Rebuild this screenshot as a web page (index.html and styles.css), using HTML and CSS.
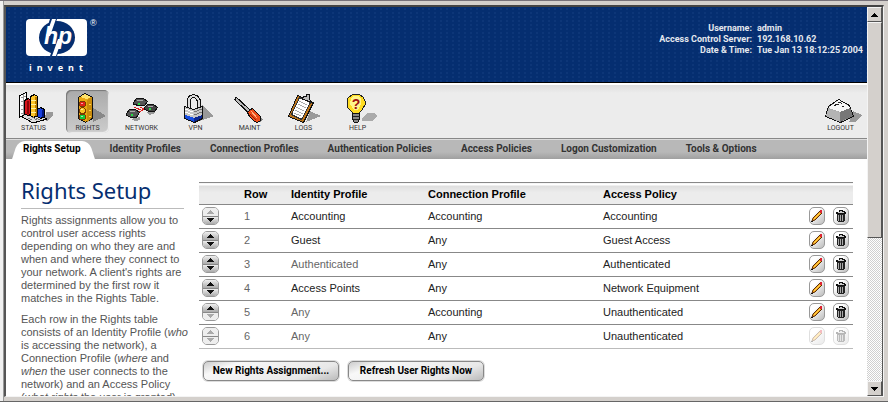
FILE: index.html
```html
<!DOCTYPE html>
<html lang="en">
<head>
    <meta charset="UTF-8">
    <meta name="viewport" content="width=device-width, initial-scale=1.0">
    <title>Rights Setup</title>
    <link rel="stylesheet" href="styles.css">
</head>
<body>
    <!-- Shared icons -->
    <svg class="symbols" aria-hidden="true">
        <symbol id="up" viewBox="0 0 7 4"><path d="M3 0h1v1h1v1h1v1h1v1H0V3h1V2h1V1h1z" fill="currentColor"/></symbol>
        <symbol id="down" viewBox="0 0 7 4"><path d="M0 0h7v1H6v1H5v1H4v1H3V3H2V2H1V1H0z" fill="currentColor"/></symbol>
        <symbol id="pencil" viewBox="0 0 14 16">
            <path d="M2 13l1-3 7-7 2 2-7 7z" fill="#f7a81c" stroke="#5a2c08"/>
            <path d="M4 11l6-6" stroke="#ffd34d"/>
            <path d="M10 2h2v3h-2z" fill="#d23"/>
            <path d="M1 13h2v1H1z" fill="#111"/>
        </symbol>
        <symbol id="trash" viewBox="0 0 14 16">
            <path d="M5 2h4v1h2v1h1v2H2V4h3z" fill="#111"/>
            <path d="M6 3h2v1H6zM4 4h6v1H4z" fill="#ccc"/>
            <path d="M3 6h8v7h-1v1H4v-1H3z" fill="#222"/>
            <path d="M4 7h1v6H4zM6 7h1v6H6zM8 7h1v6H8z" fill="#aaa"/>
        </symbol>
    </svg>

    <div class="window">
        <div class="page">
            <header class="banner">
                <div class="logo">
                    <svg viewBox="0 0 74 38" width="74" height="38" role="img" aria-label="hp">
                        <rect width="61" height="37" rx="4" fill="#fff"/>
                        <ellipse cx="31" cy="18.500" rx="18" ry="16.500" fill="#052e70"/>
                        <path d="M24 0h7l-2 6h-7zM31 37h-7l2-6h7z" fill="#052e70"/>
                        <path d="M26 0h4l-6 17h-4zM32 20h4l-6 17h-4z" fill="#fff"/>
                        <text x="18" y="25" class="logo-letters">hp</text>
                        <text x="64" y="7" class="logo-mark">®</text>
                    </svg>
                    <span class="tagline">invent</span>
                </div>
                <dl class="session">
                    <dt>Username:</dt><dd>admin</dd>
                    <dt>Access Control Server:</dt><dd>192.168.10.62</dd>
                    <dt>Date &amp; Time:</dt><dd>Tue Jan 13 18:12:25 2004</dd>
                </dl>
            </header>

            <div class="toolbar">
                <button class="tool">
                    <svg viewBox="0 0 43 34" width="43" height="34">
                        <path d="M29 27l5-2v-3h7v4l-6 5z" fill="#999"/>
                        <path d="M7 25l14 8 14-4-13-7z" fill="#ddd" stroke="#000"/>
                        <path d="M7.500 5.500l7-3v21l-7 4z" fill="#fff" stroke="#000"/>
                        <path d="M9 8l5-2M9 12l5-2M9 16l5-2M9 20l5-2M9 24l5-2M11 4v21" stroke="#999"/>
                        <path d="M12.500 10.500l4-2 3 2v14l-4 1-3-2z" fill="#d8151c" stroke="#000"/>
                        <path d="M16 11v13" stroke="#8a0508" stroke-width="2"/>
                        <path d="M18.500 6.500l4-2 3 2v19l-4 2-3-2z" fill="#ffc629" stroke="#000"/>
                        <path d="M23.500 7v19" stroke="#b67a00" stroke-width="2"/>
                        <path d="M19 10h5M19 14h5M19 18h5M19 22h5" stroke="#fff0a0"/>
                        <path d="M25.500 19.500l3-2 4 2v7l-4 2-3-2z" fill="#173fdd" stroke="#000"/>
                        <path d="M31 20v7" stroke="#001780" stroke-width="2"/>
                        <path d="M16 28l4 2M20 27l5 3M24 28l4 2" stroke="#777"/>
                    </svg>
                    <span>STATUS</span>
                </button>
                <button class="tool selected">
                    <svg viewBox="0 0 43 34" width="43" height="34">
                        <path d="M26 17l14 9-13 6z" fill="#888"/>
                        <path d="M12.500 7.500l6-4 8 4v21l-7 4-7-4z" fill="#e9a713" stroke="#111"/>
                        <path d="M21 10l5-3v21l-5 4z" fill="#c98b0c"/>
                        <path d="M14 7l5-3 6 3-4 2z" fill="#ffe36a"/>
                        <path d="M23 14h2M23 20h2M23 26h2" stroke="#ffd64c"/>
                        <circle cx="16.500" cy="14" r="3" fill="#e0201b" stroke="#7a3a00"/>
                        <circle cx="16.500" cy="20.500" r="3" fill="#f9c424" stroke="#7a3a00"/>
                        <circle cx="16.500" cy="27" r="3" fill="#16c93a" stroke="#7a3a00"/>
                        <path d="M15 13h2v1h-2zM15 19h2v1h-2zM15 26h2v1h-2z" fill="#fff" opacity=".6"/>
                    </svg>
                    <span>RIGHTS</span>
                </button>
                <button class="tool">
                    <svg viewBox="0 0 43 34" width="43" height="34">
                        <path d="M27 22l8-2v3l-6 2zM11 29l9-2v3l-5 1z" fill="#999"/>
                        <g stroke="#111">
                            <path d="M13.500 12.500l3-4h7l4 3-3 4h-5l-6-1z" fill="#555"/>
                            <path d="M24.500 17.500l3-3h6l4 3-3 4h-5l-5-2z" fill="#444"/>
                            <path d="M6.500 23.500l3-4h6l4 3-3 5h-5l-5-2z" fill="#555"/>
                        </g>
                        <path d="M14 17l9 4M20 17l4 2M19 22l5-3" stroke="#e02020"/>
                        <path d="M17 10l6 1M28 16l5 1M10 21l5 1" stroke="#aaa"/>
                        <path d="M18 13h2v2h-2zM29 18h2v2h-2zM11 24h2v2h-2z" fill="#22e041"/>
                    </svg>
                    <span>NETWORK</span>
                </button>
                <button class="tool">
                    <svg viewBox="0 0 43 34" width="43" height="34">
                        <path d="M28 15l12 11-14 5z" fill="#999"/>
                        <path d="M14.500 19V10l2-3 3-1 3 1 2 3v9" fill="none" stroke="#111" stroke-width="4"/>
                        <path d="M14.500 19V10l2-3 3-1 3 1 2 3v9" fill="none" stroke="#ddd" stroke-width="2"/>
                        <path d="M10.500 16.500l9 3 9-3v12l-8 4-10-4z" fill="#c8c8c8" stroke="#111"/>
                        <path d="M11 19l8 3M11 22l8 3" stroke="#fff"/>
                        <path d="M20 22l8-3M20 25l8-3" stroke="#777"/>
                        <path d="M11 25l9 3v4l-9-4z" fill="#174ee0"/>
                        <path d="M20 28l8-3v3l-8 4z" fill="#0b2790"/>
                    </svg>
                    <span>VPN</span>
                </button>
                <button class="tool">
                    <svg viewBox="0 0 43 34" width="43" height="34">
                        <path d="M25 20l10 9-3 3z" fill="#888"/>
                        <path d="M7 8l16 15" stroke="#111" stroke-width="4"/>
                        <path d="M8 9l14 13" stroke="#bbb" stroke-width="2"/>
                        <path d="M19.500 22.500l3-3 2-1 8 8v4l-3 2-3-1-5-5z" fill="#ed4b18" stroke="#111"/>
                        <path d="M23 21l6 7" stroke="#ffb080"/>
                        <path d="M22 24l6 6" stroke="#981d02"/>
                    </svg>
                    <span>MAINT</span>
                </button>
                <button class="tool">
                    <svg viewBox="0 0 43 34" width="43" height="34">
                        <path d="M28 21l11 5-15 6z" fill="#999"/>
                        <path d="M6.500 26.500l9-21 16 7-10 20z" fill="#bd7418" stroke="#111"/>
                        <path d="M9.500 24.500l8-17 11 5-9 17z" fill="#fff" stroke="#333"/>
                        <path d="M17 11l8 4M16 14l8 4M14 17l8 4M13 20l8 4M12 23l7 3" stroke="#aaa"/>
                        <path d="M20 9l2-3h2V4h3v4l2 4z" fill="#bbb" stroke="#111"/>
                    </svg>
                    <span>LOGS</span>
                </button>
                <button class="tool">
                    <svg viewBox="0 0 43 34" width="43" height="34">
                        <path d="M26 28l6-5h7l2 3-4 5H26z" fill="#aaa"/>
                        <path d="M17 4h6l4 3 2 4v4l-3 5-2 2-1 3h-6l-1-3-4-4-1-5 1-5z" fill="#ffdc22" stroke="#222"/>
                        <path d="M15 8l3-2h5l2 3v5l-3 6h-4l-4-6z" fill="#fff58a"/>
                        <text x="20" y="19" class="question">?</text>
                        <path d="M16.500 23.500h7v6l-2 3h-3l-2-3z" fill="#888" stroke="#111"/>
                        <path d="M17 26h7M17 29h6" stroke="#222"/>
                    </svg>
                    <span>HELP</span>
                </button>
                <button class="tool logout">
                    <svg viewBox="0 0 43 34" width="43" height="34">
                        <path d="M30 32l4-11 9 4-7 7z" fill="#999"/>
                        <path d="M6.500 26.500l3-10 10-7 11 6 4 11-13 6z" fill="#aaa" stroke="#111"/>
                        <path d="M10 17l10-7 10 6 1 2-10 4-11-4z" fill="#f6f6f6"/>
                        <path d="M9 19l12 3v10L7 26z" fill="#b4b4b4"/>
                        <path d="M21 22l10-4 3 8-13 6z" fill="#777"/>
                        <path d="M15 16l3-2 2 1M19 13l2-1 2 2M23 16h2" stroke="#222" fill="none"/>
                    </svg>
                    <span>LOGOUT</span>
                </button>
            </div>

            <nav class="tabs">
                <a href="#" class="active">Rights Setup</a>
                <a href="#">Identity Profiles</a>
                <a href="#">Connection Profiles</a>
                <a href="#">Authentication Policies</a>
                <a href="#">Access Policies</a>
                <a href="#">Logon Customization</a>
                <a href="#">Tools &amp; Options</a>
            </nav>

            <div class="content">
                <aside class="help">
                    <h1>Rights Setup</h1>
                    <p>Rights assignments allow you to control user access rights depending on who they are and when and where they connect to your network. A client's rights are determined by the first row it matches in the Rights Table.</p>
                    <p>Each row in the Rights table consists of an Identity Profile (<em>who</em> is accessing the network), a Connection Profile (<em>where</em> and <em>when</em> the user connects to the network) and an Access Policy (<em>what rights</em> the user is granted).</p>
                </aside>

                <main>
                    <table>
                        <thead>
                            <tr>
                                <th class="col-move"></th>
                                <th class="col-row">Row</th>
                                <th class="col-identity">Identity Profile</th>
                                <th class="col-connection">Connection Profile</th>
                                <th>Access Policy</th>
                                <th class="col-actions"></th>
                            </tr>
                        </thead>
                        <tbody>
                            <tr>
                                <td><div class="move"><button disabled aria-label="Move up"><svg><use href="#up"/></svg></button><button aria-label="Move down"><svg><use href="#down"/></svg></button></div></td>
                                <td class="soft">1</td><td>Accounting</td><td>Accounting</td><td>Accounting</td>
                                <td><div class="actions"><button aria-label="Edit"><svg><use href="#pencil"/></svg></button><button aria-label="Delete"><svg><use href="#trash"/></svg></button></div></td>
                            </tr>
                            <tr>
                                <td><div class="move"><button aria-label="Move up"><svg><use href="#up"/></svg></button><button aria-label="Move down"><svg><use href="#down"/></svg></button></div></td>
                                <td class="soft">2</td><td>Guest</td><td>Any</td><td>Guest Access</td>
                                <td><div class="actions"><button aria-label="Edit"><svg><use href="#pencil"/></svg></button><button aria-label="Delete"><svg><use href="#trash"/></svg></button></div></td>
                            </tr>
                            <tr>
                                <td><div class="move"><button aria-label="Move up"><svg><use href="#up"/></svg></button><button aria-label="Move down"><svg><use href="#down"/></svg></button></div></td>
                                <td class="soft">3</td><td class="soft">Authenticated</td><td>Any</td><td>Authenticated</td>
                                <td><div class="actions"><button aria-label="Edit"><svg><use href="#pencil"/></svg></button><button aria-label="Delete"><svg><use href="#trash"/></svg></button></div></td>
                            </tr>
                            <tr>
                                <td><div class="move"><button aria-label="Move up"><svg><use href="#up"/></svg></button><button aria-label="Move down"><svg><use href="#down"/></svg></button></div></td>
                                <td class="soft">4</td><td>Access Points</td><td>Any</td><td>Network Equipment</td>
                                <td><div class="actions"><button aria-label="Edit"><svg><use href="#pencil"/></svg></button><button aria-label="Delete"><svg><use href="#trash"/></svg></button></div></td>
                            </tr>
                            <tr>
                                <td><div class="move"><button aria-label="Move up"><svg><use href="#up"/></svg></button><button disabled aria-label="Move down"><svg><use href="#down"/></svg></button></div></td>
                                <td class="soft">5</td><td class="soft">Any</td><td>Accounting</td><td>Unauthenticated</td>
                                <td><div class="actions"><button aria-label="Edit"><svg><use href="#pencil"/></svg></button><button aria-label="Delete"><svg><use href="#trash"/></svg></button></div></td>
                            </tr>
                            <tr>
                                <td><div class="move"><button disabled aria-label="Move up"><svg><use href="#up"/></svg></button><button disabled aria-label="Move down"><svg><use href="#down"/></svg></button></div></td>
                                <td class="soft">6</td><td class="soft">Any</td><td>Any</td><td>Unauthenticated</td>
                                <td><div class="actions"><button disabled aria-label="Edit"><svg><use href="#pencil"/></svg></button><button disabled aria-label="Delete"><svg><use href="#trash"/></svg></button></div></td>
                            </tr>
                        </tbody>
                    </table>
                    <div class="buttons">
                        <button>New Rights Assignment...</button>
                        <button>Refresh User Rights Now</button>
                    </div>
                </main>
            </div>
        </div>

        <div class="scrollbar">
            <button aria-label="Scroll up"><svg><use href="#up"/></svg></button>
            <div class="thumb"></div>
            <div class="track"></div>
            <button aria-label="Scroll down"><svg><use href="#down"/></svg></button>
        </div>
    </div>
</body>
</html>
```
FILE: styles.css
```css
* {
    box-sizing: border-box;
}
body {
    margin: 0;
    height: 100vh;
    padding: 4px;
    border-top: 1px solid #77727a;
    border-bottom: 1px solid #666;
    background: #d4d0cc;
    box-shadow: inset 3px 0 #f0f0f0, inset 4px 0 #999;
    font-family: "Liberation Sans", Arial, sans-serif;
    font-size: 11px;
    color: #222;
    overflow: hidden;
}
button {
    padding: 0;
    font-family: inherit;
    cursor: pointer;
}
.symbols {
    position: absolute;
    width: 0;
    height: 0;
}
.window {
    display: flex;
    height: 100%;
    border: 1px solid #f4f4f4;
    border-top: 2px solid #444;
    border-left: 2px solid #555;
    background: white;
}
.page {
    flex: 1;
    min-width: 0;
    overflow: hidden;
}

/* Banner */
.banner {
    display: flex;
    justify-content: space-between;
    height: 76px;
    padding: 12px 4px 0 20px;
    border-bottom: 1px solid black;
    background-color: #052e70;
    background-image: radial-gradient(#0d3678 1px, transparent 1px);
    background-size: 6px 4px;
    color: #e4e8ee;
}
.logo svg {
    display: block;
}
.logo-letters {
    font: italic bold 23px "Liberation Sans", Arial, sans-serif;
    fill: white;
}
.logo-mark {
    font-size: 9px;
    fill: white;
}
.tagline {
    display: block;
    padding: 5px 3px 0;
    font: bold 9px/12px "Noto Sans", sans-serif;
    letter-spacing: 5px;
    color: white;
}
.session {
    display: grid;
    grid-template-columns: auto auto;
    column-gap: 5px;
    align-content: start;
    margin: 4px 0 0;
    font-family: Roboto, sans-serif;
    font-size: 9px;
    font-weight: bold;
    line-height: 11px;
}
.session dt {
    text-align: right;
}
.session dd {
    margin: 0;
}

/* Toolbar */
.toolbar {
    display: flex;
    gap: 11px;
    height: 56px;
    padding: 5px 5px 0 6px;
    border-top: 2px solid white;
    border-bottom: 1px solid #888;
    background: linear-gradient(#ddd, #ececec 8px);
}
.tool {
    display: flex;
    flex-direction: column;
    align-items: center;
    width: 43px;
    height: 43px;
    border: none;
    border-radius: 5px;
    background: none;
    font: 7px/8px Roboto, sans-serif;
    color: #333;
}
.tool svg {
    flex: none;
    shape-rendering: crispEdges;
}
.tool.selected {
    background: linear-gradient(#aaa, #ccc);
    box-shadow: inset 1px 1px 1px #777, inset -1px -1px 1px #eee;
}
.logout {
    margin-left: auto;
}
.question {
    font: bold 14px "Liberation Sans", Arial, sans-serif;
    text-anchor: middle;
    fill: #a01010;
}

/* Tabs */
.tabs {
    display: flex;
    gap: 29px;
    height: 20px;
    padding-left: 17px;
    border-top: 1px solid #ddd;
    background: linear-gradient(#b8b8b8 12px, #a0a0a0);
    font: bold 10px/18px Roboto, sans-serif;
    white-space: nowrap;
}
.tabs a {
    color: #333;
    text-decoration: none;
}
.tabs .active {
    position: relative;
    z-index: 0;
    color: black;
}
.active::before,
.active::after {
    content: "";
    position: absolute;
    z-index: -1;
    top: 1px;
    bottom: 0;
    background: white;
}
.active::before {
    left: -8px;
    right: 20px;
    border-radius: 7px 0 0 0;
    transform: skewX(-18deg);
}
.active::after {
    left: 20px;
    right: -11px;
    border-radius: 0 7px 0 0;
    transform: skewX(18deg);
}

/* Content */
.content {
    display: flex;
    gap: 15px;
    padding: 17px 14px 0 15px;
}
.help {
    flex: none;
    width: 163px;
    color: #555;
}
.help h1 {
    margin: 0 0 5px;
    padding-bottom: 4px;
    border-bottom: 1px solid #bbb;
    font: 22px/28px "Noto Sans", Tahoma, sans-serif;
    color: #052e70;
}
.help p {
    margin: 0 -6px 8px 0;
    line-height: 13px;
}
main {
    flex: 1;
    padding-top: 6px;
}

table {
    width: 100%;
    table-layout: fixed;
    border-collapse: collapse;
    border-top: 1px solid #888;
}
th, td {
    height: 24px;
    padding: 0 0 1px;
    border-bottom: 1px solid #888;
    text-align: left;
}
th {
    height: 22px;
    padding: 0;
    background: linear-gradient(white 2px, #ddd 2px, #ececec 9px);
    color: black;
}
tr:last-child td {
    border-color: #bbb;
}
.col-move {
    width: 45px;
}
.col-row {
    width: 47px;
}
.col-identity {
    width: 137px;
}
.col-connection {
    width: 175px;
}
.col-actions {
    width: 44px;
}
.soft {
    color: #666;
}
.move {
    display: flex;
    flex-direction: column;
    width: 17px;
    height: 18px;
    margin-left: 3px;
    border: 1px solid #999;
    border-radius: 5px;
    overflow: hidden;
}
.move button {
    display: flex;
    flex: 1;
    align-items: center;
    justify-content: center;
    border: none;
    background: linear-gradient(#eee, #aaa);
    color: #111;
}
.move button + button {
    border-top: 1px solid #888;
}
.move svg, .scrollbar svg {
    width: 7px;
    height: 4px;
    shape-rendering: crispEdges;
}
.move button:disabled {
    background: #eee;
    color: #aaa;
}
.actions {
    display: flex;
    gap: 8px;
}
.actions button {
    width: 16px;
    height: 18px;
    border: 1px solid #999;
    border-radius: 5px;
    background: linear-gradient(135deg, white 30%, #bbb);
}
.actions svg {
    display: block;
    width: 14px;
    height: 16px;
}
.actions button:disabled {
    opacity: 0.3;
}

.buttons {
    display: flex;
    gap: 9px;
    padding: 12px 4px;
}
.buttons button {
    width: 136px;
    height: 20px;
    border: 1px solid #888;
    border-radius: 5px;
    background: linear-gradient(160deg, #ccc, #f8f8f8 20%, #e8e8e8 75%, #bbb);
    box-shadow: 0 0 0 1px #ddd;
    font: bold 10px/18px Roboto, sans-serif;
    color: black;
    white-space: nowrap;
}

/* Scrollbar */
.scrollbar {
    display: flex;
    flex-direction: column;
    flex: none;
    width: 16px;
    border-right: 1px solid #555;
}
.scrollbar button {
    display: flex;
    align-items: center;
    justify-content: center;
    height: 15px;
    color: black;
}
.scrollbar button, .thumb {
    border: 1px solid;
    border-color: #f4f4f4 #555 #555 #f4f4f4;
    background: #d4d0cc;
}
.thumb {
    flex: 3;
}
.track {
    flex: 2;
    background: repeating-conic-gradient(#d0d0d0 0 25%, white 0 50%) 0 0 / 2px 2px;
}
```
